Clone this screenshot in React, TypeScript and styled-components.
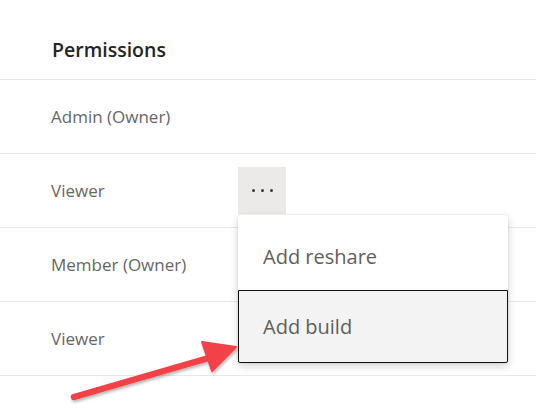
import React from 'react';
import styled, { createGlobalStyle } from 'styled-components';

const GlobalStyle = createGlobalStyle`
  html, body {
    margin: 0;
    padding: 0;
    background: #ffffff;
  }
  body {
    font-family: "Open Sans", "Noto Sans", sans-serif;
  }
`

const roles = ['Admin (Owner)', 'Viewer', 'Member (Owner)', 'Viewer'];

export default function App() {
  return (
    <>
      <GlobalStyle />
      <Page>
        <Header>
          <h3>Permissions</h3>
        </Header>
        {roles.map((role, i) => (
          <Row key={i}>
            <RoleName>{role}</RoleName>
            {i === 1 && (
              <MoreWrapper>
                <MoreButton aria-label="More options">
                  <Dot /><Dot /><Dot />
                </MoreButton>
                <Menu>
                  <MenuItem>Add reshare</MenuItem>
                  <MenuItem $isFocused>Add build</MenuItem>
                </Menu>
              </MoreWrapper>
            )}
          </Row>
        ))}
        <Arrow width="536" height="416" viewBox="0 0 536 416">
          <defs>
            <filter id="arrowShadow" x="-10%" y="-30%" width="120%" height="160%">
              <feDropShadow dx="1" dy="2" stdDeviation="1.5" floodColor="#000" floodOpacity="0.3" />
            </filter>
          </defs>
          <g filter="url(#arrowShadow)">
            <line x1="74" y1="397" x2="212" y2="357" stroke="#f24346" strokeWidth="6.5" strokeLinecap="round" />
            <polygon points="236,347 202,342 212,371" fill="#f24346" stroke="#f24346" strokeWidth="2" strokeLinejoin="round" />
          </g>
        </Arrow>
      </Page>
    </>
  );
}

const Page = styled.div`
  position: relative;
  width: 536px;
  height: 416px;
  overflow: hidden;
  background: #ffffff;
`

const Header = styled.div`
  height: 80px;
  box-sizing: border-box;
  padding: 20px 0 0 52px;
  display: flex;
  align-items: center;
  border-bottom: 1px solid #e8e8e8;

  > h3 {
    margin: 0;
    font-size: 19.5px;
    font-weight: 600;
    color: #252423;
  }
`

const Row = styled.div`
  height: 74px;
  box-sizing: border-box;
  border-bottom: 1px solid #e8e8e8;
  display: flex;
  align-items: center;
  padding-left: 51px;
`

const RoleName = styled.div`
  width: 187px;
  font-size: 17px;
  color: #666666;
`

const MoreWrapper = styled.div`
  position: relative;
`

const MoreButton = styled.div`
  width: 48px;
  height: 47px;
  background: #ebeae9;
  display: flex;
  align-items: center;
  justify-content: center;
  gap: 6px;
`

const Dot = styled.span`
  width: 3px;
  height: 3px;
  border-radius: 50%;
  background: #3b3a39;
`

const Menu = styled.div`
  position: absolute;
  top: 48px;
  left: 0;
  width: 270px;
  background: #ffffff;
  border-radius: 3px;
  box-shadow: 0 3px 8px rgba(0, 0, 0, 0.18), 0 0 2px rgba(0, 0, 0, 0.12);
  z-index: 2;
`

const MenuItem = styled.div<{ $isFocused?: boolean }>`
  height: ${(props) => (props.$isFocused ? '73px' : '75px')};
  box-sizing: border-box;
  display: flex;
  align-items: center;
  padding: ${(props) => (props.$isFocused ? '0 0 0 24px' : '7px 0 0 24px')};
  font-size: 20px;
  color: #5f5e5d;
  background: ${(props) => (props.$isFocused ? '#f3f3f3' : 'transparent')};
  border: ${(props) => (props.$isFocused ? '1px solid #111111' : '1px solid transparent')};
  border-radius: ${(props) => (props.$isFocused ? '0 0 2px 2px' : '3px 3px 0 0')};
`

const Arrow = styled.svg`
  position: absolute;
  top: 0;
  left: 0;
  pointer-events: none;
  z-index: 3;
`
